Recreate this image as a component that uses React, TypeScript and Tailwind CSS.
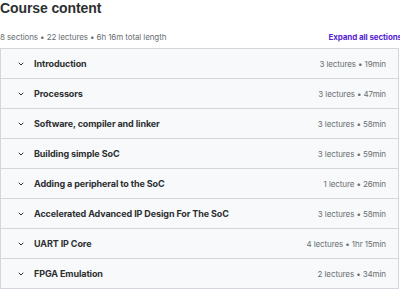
const sections = [
  { title: "Introduction", meta: "3 lectures • 19min" },
  { title: "Processors", meta: "3 lectures • 47min" },
  { title: "Software, compiler and linker", meta: "3 lectures • 58min" },
  { title: "Building simple SoC", meta: "3 lectures • 59min" },
  { title: "Adding a peripheral to the SoC", meta: "1 lecture • 26min" },
  { title: "Accelerated Advanced IP Design For The SoC", meta: "3 lectures • 58min" },
  { title: "UART IP Core", meta: "4 lectures • 1hr 15min" },
  { title: "FPGA Emulation", meta: "2 lectures • 34min" },
];

function Chevron() {
  return (
    <svg width="8" height="8" viewBox="0 0 24 24" fill="none" stroke="#2d2f31" strokeWidth="3" strokeLinecap="round" strokeLinejoin="round">
      <path d="M6 9l6 6 6-6" />
    </svg>
  );
}

export default function App() {
  return (
    <div className="w-[400px] h-[291px] overflow-hidden bg-white font-['Inter',sans-serif] text-[#2d2f31]">
      {/* header */}
      <h2 className="font-['Liberation_Sans',sans-serif] text-[14px] leading-[16px] font-bold tracking-[-0.1px]">Course content</h2>
      <div className="flex items-end justify-between mt-[15px] h-[12px]">
        <span className="text-[8px] text-[#6a6f73] tracking-[-0.1px]">8 sections • 22 lectures • 6h 16m total length</span>
        <span className="text-[8px] font-bold text-[#5624d0] mr-[-2px] tracking-[-0.1px]">Expand all sections</span>
      </div>

      {/* sections */}
      <div className="mt-[5px] w-[399px] border border-[#d1d7dc] border-b-0">
        {sections.map((s) => (
          <div key={s.title} className="h-[30px] flex items-center bg-[#f7f9fa] border-b border-[#d1d7dc] pl-[16px] pr-[12px]">
            <Chevron />
            <span className="ml-[9px] text-[9px] font-bold tracking-[-0.1px] flex-1">{s.title}</span>
            <span className="text-[8px] text-[#6a6f73] tracking-[-0.1px]">{s.meta}</span>
          </div>
        ))}
      </div>
    </div>
  );
}
